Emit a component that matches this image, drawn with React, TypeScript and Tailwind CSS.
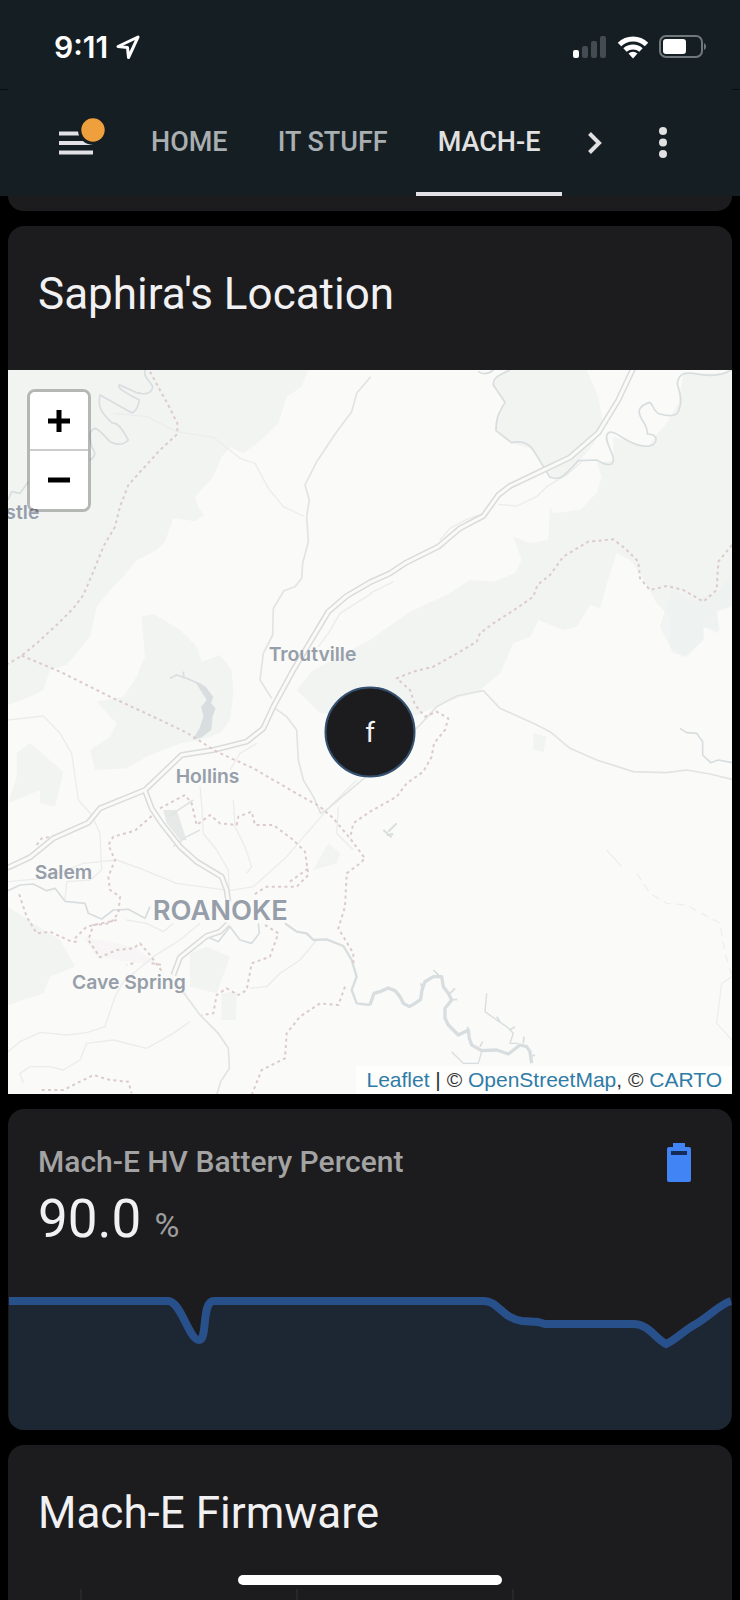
import React from 'react';

const tabs = [
  { id: 'home', name: 'HOME' },
  { id: 'it-stuff', name: 'IT STUFF' },
  { id: 'mach-e', name: 'MACH-E' },
];

const places = [
  { name: 'stle', x: -8, y: 446, size: 58 },
  { name: 'Troutville', x: 782, y: 874, size: 58 },
  { name: 'Hollins', x: 503, y: 1239, size: 58 },
  { name: 'Salem', x: 80, y: 1526, size: 58 },
  { name: 'Cave Spring', x: 192, y: 1856, size: 58 },
];

function StatusBar() {
  return (
    <div className="flex h-[89px] items-center justify-between pt-[5px] pr-[33px] pl-[54px]">
      <div className="flex items-center gap-2 font-[Inter,sans-serif] text-[30px] font-semibold text-white">
        <span>9:11</span>
        <svg className="h-6 w-6" viewBox="0 0 24 24" fill="none" stroke="currentColor" strokeWidth="3" strokeLinejoin="round">
          <path d="M2 11.500 22 2 12.500 22.500 11.500 12.500Z" />
        </svg>
      </div>
      <div className="flex items-center gap-[10px] text-white">
        <svg className="h-6 w-[34px]" viewBox="0 0 34 24">
          <rect x="0" y="15" width="6" height="8" rx="2" fill="#fff" />
          <g fill="#444c51">
            <rect x="9" y="11" width="6" height="12" rx="2" />
            <rect x="18" y="6" width="6" height="17" rx="2" />
            <rect x="27" y="1" width="6" height="22" rx="2" />
          </g>
        </svg>
        <svg className="h-6 w-8" viewBox="0 0 32 24" fill="none" stroke="currentColor" strokeWidth="5">
          <path d="M2.5 9.5a19.5 19.5 0 0 1 27 0" />
          <path d="M8 15a12 12 0 0 1 16 0" />
          <path d="M11.5 18.5a7 7 0 0 1 9 0L16 23.5Z" fill="currentColor" stroke="none" />
        </svg>
        <svg className="h-6 w-12" viewBox="0 0 48 24">
          <rect x="1" y="1" width="42" height="21" rx="6" fill="none" stroke="#70787c" strokeWidth="2" />
          <rect x="4" y="4" width="23" height="15" rx="3" fill="#fff" />
          <path d="M45 8a4 4 0 0 1 0 7Z" fill="#70787c" />
        </svg>
      </div>
    </div>
  );
}

function Header() {
  return (
    <header className="bg-[#151e23]">
      <StatusBar />
      <div className="flex h-px justify-between">
        <span className="w-2 bg-[#080d10]" />
        <span className="w-2 bg-[#080d10]" />
      </div>
      <nav className="flex h-[106px] pl-[53px]">
        <button aria-label="Menu" className="w-[76px]">
          <svg className="h-[50px] w-14" viewBox="0 0 56 50">
            <path d="M6 15.5h34M6 25h34M6 34.5h34" stroke="#e1e1e6" strokeWidth="4" />
            <circle cx="40" cy="12" r="15" fill="#151e23" />
            <circle cx="40" cy="12" r="11.7" fill="#ef9f3b" />
          </svg>
        </button>
        <div className="flex gap-[6px]" role="tablist">
          {tabs.map((tab) => {
            const isActive = tab.id === 'mach-e';

            return (
              <button
                key={tab.id}
                role="tab"
                aria-selected={isActive}
                className={`border-b-4 px-[22px] pt-[2px] text-[27px] font-medium whitespace-nowrap ${
                  isActive ? 'border-b-[#e1e1e6] text-[#e1e1e1]' : 'border-b-transparent text-[#a9afb1]'
                }`}
              >
                {tab.name}
              </button>
            );
          })}
        </div>
        <button aria-label="Next tabs" className="w-[65px] pl-[22px]">
          <svg className="h-7 w-6" viewBox="0 0 24 28" fill="none" stroke="#e1e1e1" strokeWidth="4">
            <path d="M5.5 4.5 15 14 5.500 23.500" />
          </svg>
        </button>
        <button aria-label="More options" className="flex w-[72px] items-center justify-center">
          <svg className="h-9 w-3" viewBox="0 0 12 36" fill="#e1e1e1">
            <circle cx="6" cy="6" r="4" />
            <circle cx="6" cy="17.5" r="4" />
            <circle cx="6" cy="29" r="4" />
          </svg>
        </button>
      </nav>
    </header>
  );
}

const highway =
  'M0 1530 30 1520 90 1492 160 1435 265 1388 300 1345 435 1290 545 1185 640 1170 740 1145 790 1105 820 1040 880 930 985 755 1040 708 1110 667 1170 640 1220 607 1315 560 1380 505 1450 468 1495 405 1530 378 1635 328 1710 292 1795 218 1855 120 1902 20';
const route581 = 'M435 1292 455 1345 485 1390 540 1460 590 1505 665 1550 680 1590 685 1625';
const route220 = 'M683 1692 660 1715 620 1728 540 1792 520 1845';

function MapDrawing() {
  return (
    <svg className="block w-full" viewBox="0 0 2172 2172" fill="none" strokeLinejoin="round">
      <rect width="2172" height="2172" fill="#fafaf8" />
      <g transform="translate(-24 -30)">
        {/* forests */}
        <g fill="#f2f4f2">
          <path d="M24 30H925L905 80 860 110 835 190 790 235 730 280 690 262 665 290 640 350 585 410 595 440 612 465 585 483 520 475 495 545 470 570 410 600 370 650 330 690 290 740 270 830 230 880 200 915 150 930 130 990 90 1010 24 1035Z" />
          <path d="M425 770 460 762 540 810 590 860 605 905 660 885 695 930 700 1000 690 1080 660 1120 600 1140 540 1150 440 1190 380 1225 285 1230 270 1170 330 1130 350 1090 290 1025 370 1010 410 950 435 890Z" />
          <path d="M50 1180 90 1150 125 1180 190 1235 165 1340 120 1330 120 1290 24 1330 50 1250Z" />
          <path d="M24 1640 100 1690 180 1740 225 1820 150 1850 130 1900 24 1935Z" />
          <path d="M1530 30 1490 55 1480 75 1515 125 1490 180 1490 215 1535 250 1590 265 1635 320 1650 355 1700 345 1740 300 1775 260 1810 200 1795 110 1760 30Z" />
          <path d="M2196 40H2050L2035 130 2000 190 1965 230 1945 260 1840 230 1840 300 1790 310 1805 350 1790 400 1740 450 1660 460 1650 440 1645 540 1590 550 1540 530 1565 600 1545 640 1480 665 1410 660 1340 705 1230 755 1110 840 940 930 890 990 960 1060 1240 1070 1330 1030 1440 990 1500 940 1540 850 1590 830 1615 780 1690 810 1730 800 1770 735 1800 745 1830 640 1850 580 1890 600 1920 640 1970 730 2010 770 2010 860 2050 890 2110 840 2110 800 2160 810 2150 750 2196 735Z" />
          <path d="M570 1780 620 1760 690 1790 650 1900 570 1880Z" />
          <path d="M665 1900 710 1895 708 1980 665 1980Z" />
          <path d="M940 1530 985 1450 1020 1480 1010 1510Z" />
          <path d="M1600 1120 1640 1130 1630 1175 1600 1170Z" />
        </g>
        <g fill="#edf1ef">
          <path d="M1980 800 2015 690 2080 725 2150 700 2196 640V740L2150 755 2155 820 2110 800 2110 840 2060 890 2020 880Z" opacity=".7" />
          <path d="M490 1350 530 1350 560 1440 540 1440 500 1390Z" fill="#e7e8e8" />
          <path d="M250 1730 400 1760 470 1810 420 1810 290 1790Z" fill="#f7f5f5" />
        </g>

        {/* minor roads */}
        <g stroke="#ececec" strokeWidth="4">
          <path d="M340 160 440 170 530 215 640 232 720 295 765 310 805 385 850 440 910 468" />
          <path d="M24 1080 130 1068 180 1120 215 1180 235 1320 275 1365 300 1420 305 1530 270 1560 200 1565 195 1620" />
          <path d="M24 1565 130 1555 250 1510 350 1500 420 1525 530 1570 690 1592 760 1580 860 1490 985 1345 1070 1260" />
          <path d="M600 1280 605 1330 610 1420 650 1470 685 1530 688 1600" />
          <path d="M24 2075 60 2045 120 2017 200 2025 260 2018 315 2000 345 1910 370 1865 460 1790 540 1740 600 1690" />
          <path d="M70 2170 60 2140 90 2120 150 2120 190 2130 240 2100 260 2050 340 2040 440 2065 520 2020 570 1985" />
          <path d="M1110 700 1180 665M1320 540 1350 505 1400 478 1440 465M1495 433 1550 438 1610 410 1640 380 1700 345 1745 305" />
          <path d="M1115 700 1020 760 985 820 955 860" />
          <path d="M700 1320 705 1400 735 1460 755 1520 740 1540M690 1230 720 1180 770 1150" />
          <path d="M1015 1340 1010 1420 1060 1470M950 1740 900 1800 840 1840 800 1880 750 1885" />
          <path d="M380 1680 440 1690 490 1715 520 1690" />
        </g>
        <g stroke="#eeeeee" strokeWidth="4">
          <path d="M1820 1470 1865 1520" />
          <path d="M1910 1540 1950 1600 2000 1630 2060 1635 2160 1690 2175 1780 2196 1850" strokeDasharray="24 16" />
          <path d="M2196 1850 2165 1870 2150 1990 2196 2040" />
        </g>
        <g stroke="#e2e3e3" strokeWidth="5">
          <path d="M1112 50 1070 100 1055 155 1010 215 950 305 915 375 928 420 920 470 925 545 908 610 905 655 885 680 852 692 820 745 818 825 790 880 780 960 815 1015" />
          <path d="M825 1045 860 1070 890 1110 895 1200 910 1260 940 1310 962 1360 985 1345 1110 1240 1200 1150 1260 1095 1310 1040 1370 1008 1450 992 1500 1045 1600 1090 1650 1115 1710 1165 1790 1200 1900 1235 2000 1238 2060 1230 2130 1242 2196 1258" />
          <path d="M545 1890 600 1965 655 2020 685 2065 688 2125 662 2165 650 2205" />
          <path d="M600 1410 560 1430 520 1460M505 1370 580 1320" />
        </g>

        {/* rivers and lakes */}
        <g stroke="#d8dddf" strokeWidth="5">
          <path d="M435 30C430 55 450 60 458 80C456 98 440 106 410 98L358 74C352 82 360 90 418 120C415 140 405 158 395 158L300 105C297 130 290 145 335 188C360 190 370 215 385 240C365 262 340 250 330 245C310 225 300 208 285 205C262 212 272 240 275 260C290 280 285 290 270 300" />
          <path d="M24 420 35 395 60 400 85 365" />
          <path d="M1435 35C1450 45 1465 42 1480 30M1530 30C1495 45 1478 55 1480 75L1515 127C1492 165 1488 180 1488 212L1535 248C1570 240 1590 255 1600 270L1650 352C1680 362 1692 350 1735 302L1790 300C1820 318 1842 320 1840 295C1835 270 1812 240 1822 222C1835 205 1860 232 1890 245C1920 260 1955 265 1965 248C1975 230 1960 222 1942 222C1945 190 1912 175 1918 150C1925 132 1945 130 1948 127C1960 130 1960 158 1980 162C2010 170 2035 170 2038 145C2050 115 2035 90 2032 70C2038 38 2055 38 2080 40C2130 50 2160 48 2196 30" />
          <path d="M24 1592 60 1575 100 1572 140 1592 165 1585 195 1624 255 1630 265 1660 305 1677 340 1650 385 1648 435 1675 450 1640" />
          <path d="M625 1732 655 1745 690 1700 720 1740 755 1750 778 1720 775 1690" />
          <path d="M2040 1105 2060 1118 2090 1120 2108 1145 2108 1185 2132 1208 2155 1200 2196 1208" />
        </g>
        <path
          d="M855 1690 890 1715 920 1720 940 1740 980 1738 1030 1758 1055 1800 1070 1850 1055 1890 1070 1930 1110 1935"
          stroke="#d8dddf"
          strokeWidth="7"
        />
        <g stroke="#d8dddf" strokeWidth="10">
          <path d="M1110 1935 1122 1900 1140 1895 1165 1884 1185 1892 1200 1910 1210 1930 1228 1940 1245 1930 1262 1918 1266 1890 1275 1865 1300 1850 1325 1850 1330 1880 1345 1900 1355 1920 1335 1945 1335 1975 1345 1995 1375 2025 1405 2010 1408 2035 1415 2055 1445 2072 1490 2070 1525 2082 1560 2055 1580 2060 1590 2075 1595 2110" />
          <path d="M1460 1900 1455 1955 1490 1980 1520 2000 1540 2020 1530 2050 1555 2050M1445 2075 1435 2110 1390 2110 1355 2075" strokeWidth="4" />
          <path d="M1150 1410 1175 1432M1165 1415 1190 1390M1160 1425 1180 1422" strokeWidth="6" />
          <path d="M1320 1850 1300 1830M1355 1920 1372 1918M1405 2010 1402 2000M1570 2050 1572 2030M1530 2010 1545 2000M1350 1900 1365 1885M1440 2060 1448 2045M1500 1985 1490 1970M1590 2090 1605 2085M1270 1890 1262 1870" strokeWidth="5" />
          <path d="M510 955 530 945 560 955 605 975M550 935 552 955" strokeWidth="5" />
          <path d="M590 970 615 980 638 1010 632 1030 645 1045 636 1070 632 1110 605 1130 580 1138 600 1105 612 1070 605 1040 622 1020Z" fill="#d8dddf" strokeWidth="3" />
        </g>

        {/* highways, casing first */}
        <g stroke="#dadbdb" strokeWidth="18">
          <path d={highway} />
          <path d={route581} />
          <path d={route220} />
        </g>
        <g stroke="#fafaf8" strokeWidth="9">
          <path d={highway} />
          <path d={route581} />
          <path d={route220} />
        </g>

        {/* county boundaries */}
        <g stroke="#dccbcb" strokeWidth="6" strokeDasharray="9 10">
          <path d="M450 35 480 90 510 145 532 190 532 222 480 270 430 325 385 375 360 440 345 500 310 560 280 635 250 705 220 745 170 795 110 850 65 887 24 912" />
          <path d="M65 887 180 935 330 1010 470 1075 560 1118 650 1175 760 1225 880 1295 960 1340 1000 1375 1050 1435 1095 1495 1080 1510 1040 1540 1035 1640 1015 1705 1060 1780 1060 1810" />
          <path d="M2196 665 2155 715 2150 800 2110 835 2050 800 2000 788 1950 800 1920 765 1915 715 1875 675 1840 648 1765 655 1690 700 1650 755 1612 785 1600 820 1550 855 1480 900 1440 930 1430 955 1380 985 1300 1030 1240 1045 1190 1065 1230 1100 1245 1145 1275 1180 1310 1165 1345 1185 1335 1220 1302 1260 1295 1300 1270 1345 1220 1380 1190 1420 1110 1465 1060 1500 1050 1545" transform="translate(0 -110)" />
          <path d="M455 1368 405 1412 340 1430 325 1455 345 1500 325 1550 330 1590 360 1610 355 1660 330 1690 280 1695 265 1740 300 1792 350 1770 400 1765 420 1750 450 1785 490 1840M230 1745 215 1745 150 1715 110 1720 80 1670 55 1595M225 1735 260 1700 350 1680" />
          <path d="M480 1345 555 1305 575 1330 590 1395 630 1365 660 1390 710 1395 715 1370 755 1355 765 1395 820 1395 880 1440 915 1475 925 1545 890 1580 800 1580 760 1605M870 1565 925 1525" />
          <path d="M795 1695 835 1720 810 1790 755 1810 740 1890 715 1905 680 1885 650 1905 640 1960 605 1965" />
          <path d="M1035 1880 1015 1935 960 1930 900 1970 860 2020 855 2095 785 2130 755 2205" />
          <path d="M125 2190 190 2190 280 2145 330 2160 385 2165 395 2200" />
          <path d="M110 1455 125 1435 155 1430M400 1810 380 1815M455 1810 490 1815" />
        </g>
      </g>
      <g fill="#969eaa" className="font-[Inter,sans-serif] font-semibold">
        {places.map((place) => (
          <text key={place.name} x={place.x} y={place.y} fontSize={place.size}>
            {place.name}
          </text>
        ))}
        <text x="434" y="1651" fontSize="82">
          ROANOKE
        </text>
      </g>
    </svg>
  );
}

function MapCard() {
  return (
    <section className="rounded-t-2xl bg-[#1c1c1e]">
      <h2 className="px-[30px] pt-[38px] pb-[46px] text-[44px] leading-[60px]">Saphira's Location</h2>
      <div className="relative overflow-hidden">
        <MapDrawing />
        <div className="absolute top-[19px] left-[19px] flex w-16 flex-col rounded-lg border-[3px] border-black/25 bg-clip-padding">
          <button aria-label="Zoom in" className="flex h-[59px] items-center justify-center rounded-t-[5px] border-b-2 border-[#ccc] bg-white">
            <svg className="h-6 w-6" viewBox="0 0 24 24" stroke="#000" strokeWidth="5">
              <path d="M1 12h22M12 1v22" />
            </svg>
          </button>
          <button aria-label="Zoom out" className="flex h-[58px] items-center justify-center rounded-b-[5px] bg-white">
            <svg className="h-6 w-6" viewBox="0 0 24 24" stroke="#000" strokeWidth="5">
              <path d="M1 12h22" />
            </svg>
          </button>
        </div>
        <div className="absolute top-1/2 left-1/2 flex h-[91px] w-[91px] -translate-x-1/2 -translate-y-1/2 items-center justify-center rounded-full border-2 border-[#33506f] bg-[#1c1c1e] text-[28px]">
          f
        </div>
        <div className="absolute right-0 bottom-0 bg-white/70 px-[10px] font-['Liberation_Sans',sans-serif] text-[21px] leading-7 text-[#333]">
          <a href="#leaflet" className="text-[#2f7ca6]">Leaflet</a> | ©{' '}
          <a href="#osm" className="text-[#2f7ca6]">OpenStreetMap</a>, ©{' '}
          <a href="#carto" className="text-[#2f7ca6]">CARTO</a>
        </div>
      </div>
    </section>
  );
}

function BatteryCard() {
  return (
    <section className="overflow-hidden rounded-2xl bg-[#1c1c1e]">
      <div className="flex items-start justify-between pt-[33px] pr-[41px] pl-[30px]">
        <h3 className="text-[30px] leading-10 font-medium text-[#a3a3a4]">Mach-E HV Battery Percent</h3>
        <svg className="h-10 w-6" viewBox="0 0 24 40" fill="#4084f5">
          <path d="M6 1h12v4H22a2 2 0 0 1 2 2v31a2 2 0 0 1-2 2H2a2 2 0 0 1-2-2V7a2 2 0 0 1 2-2h4Z" />
          <path d="M4 9h16v4H4Z" fill="#152c58" />
        </svg>
      </div>
      <p className="px-[30px] pt-[5px] text-[53px] leading-[64px]">
        90.0 <span className="text-[34px] text-[#9e9e9f]">%</span>
      </p>
      <svg className="mt-[33px] block w-full" viewBox="0 0 724 140" fill="none">
        <path
          d="M1 11H160C173 11 181 50 191 50C200 50 193 11 206 11H476C490 11 494 28 514 31L530 32 537 34H626C640 34 648 49 658 54C668 50 676 40 688 34C702 26 712 14 723 11V140H1Z"
          fill="#1d2633"
        />
        <path
          d="M1 11H160C173 11 181 50 191 50C200 50 193 11 206 11H476C490 11 494 28 514 31L530 32 537 34H626C640 34 648 49 658 54C668 50 676 40 688 34C702 26 712 14 723 11"
          stroke="#28508a"
          strokeWidth="8"
        />
      </svg>
    </section>
  );
}

function FirmwareCard() {
  return (
    <section className="flex flex-1 flex-col rounded-t-2xl bg-[#1c1c1e]">
      <h2 className="px-[30px] pt-[38px] pb-[46px] text-[44px] leading-[60px]">Mach-E Firmware</h2>
      <div className="flex min-h-[11px] flex-1 pl-[72px]">
        <span className="w-[216px] border-l-2 border-[#272729]" />
        <span className="w-[216px] border-l-2 border-[#272729]" />
        <span className="border-l-2 border-[#272729]" />
      </div>
    </section>
  );
}

export default function App() {
  return (
    <div className="flex min-h-screen flex-col bg-black font-[Roboto,sans-serif] text-[#f1f1f3]">
      <Header />
      <main className="flex flex-1 flex-col gap-[15px] px-2">
        <div className="h-[15px] rounded-b-2xl bg-[#1c1c1e]" />
        <MapCard />
        <BatteryCard />
        <FirmwareCard />
      </main>
      <div className="fixed bottom-[15px] left-1/2 h-[10px] w-[264px] -translate-x-1/2 rounded-full bg-white" />
    </div>
  );
}
